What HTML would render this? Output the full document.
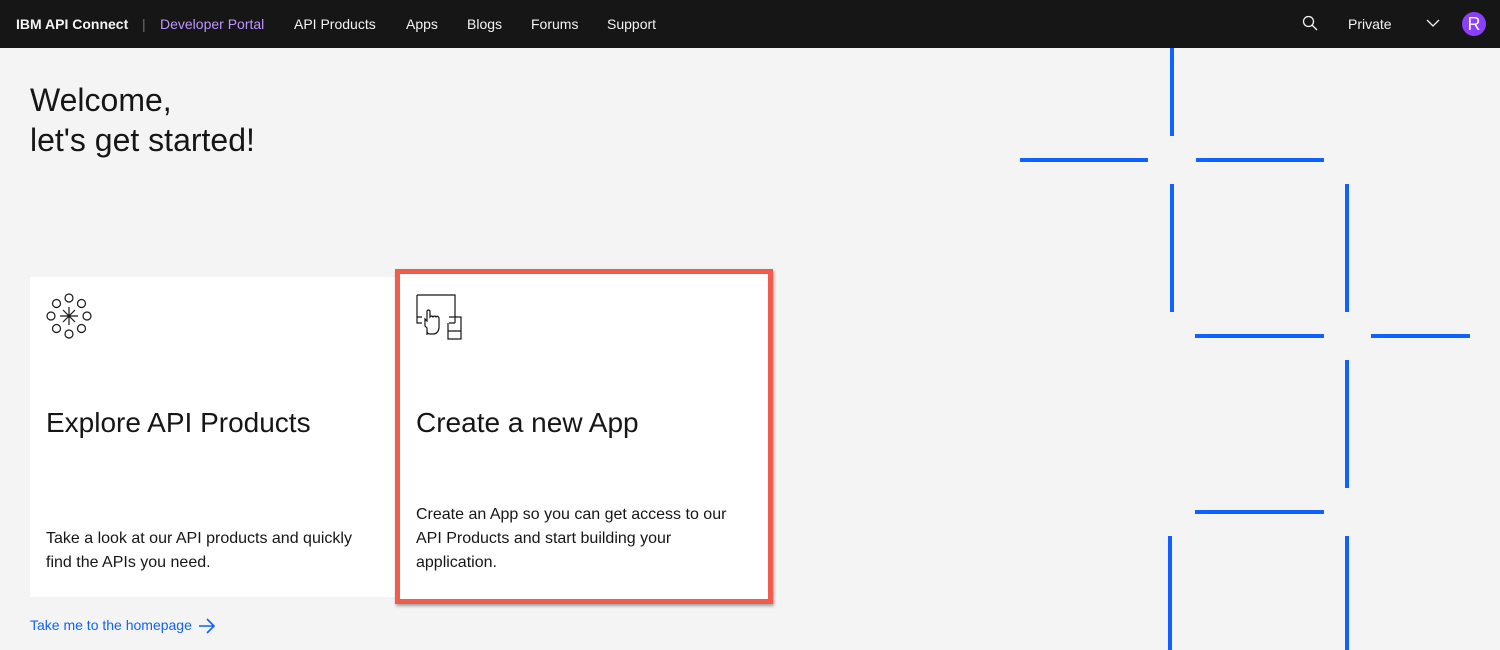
<!DOCTYPE html>
<html><head><meta charset="utf-8"><style>
*{margin:0;padding:0;box-sizing:border-box}
body{width:1500px;height:650px;overflow:hidden;background:#f4f4f4;font-family:"Liberation Sans",sans-serif;color:#161616;position:relative}
.nav{position:absolute;left:0;top:0;width:1500px;height:48px;background:#161616;color:#f4f4f4;font-size:14px}
.nav span{position:absolute;top:16px;line-height:16px}
.b{position:absolute;background:#0f62fe}
.h{height:4px;width:128px}
.v{width:4px;height:128px}
h1{position:absolute;left:30px;top:80px;font-size:32px;font-weight:400;line-height:40px;color:#161616}
.card{position:absolute;background:#fff}
.t{position:absolute;font-size:28px;line-height:32px}
.p{position:absolute;font-size:16px;line-height:24px;color:#161616}
</style></head><body>
<div class="nav">
<span style="left:16px;font-weight:bold">IBM API Connect</span>
<span style="left:142px;color:#6f6f6f">|</span>
<span style="left:160px;color:#be95ff">Developer Portal</span>
<span style="left:294px">API Products</span>
<span style="left:406px">Apps</span>
<span style="left:467px">Blogs</span>
<span style="left:531px">Forums</span>
<span style="left:607px">Support</span>
<svg style="position:absolute;left:1302px;top:15px" width="16" height="16" viewBox="0 0 16 16" fill="none" stroke="#f4f4f4" stroke-width="1.3"><circle cx="6.5" cy="6.5" r="5"/><path d="M10 10l5 5"/></svg>
<span style="left:1348px">Private</span>
<svg style="position:absolute;left:1426px;top:18px" width="14" height="10" viewBox="0 0 14 10" fill="none" stroke="#f4f4f4" stroke-width="1.3"><path d="M1 2l6 6 6-6"/></svg>
<div style="position:absolute;left:1462px;top:12px;width:24px;height:24px;border-radius:50%;background:#8a3ffc;color:#fff;font-size:18px;text-align:center;line-height:24px">R</div>
</div>
<h1>Welcome,<br>let's get started!</h1>

<div class="card" style="left:30px;top:277px;width:366px;height:320px"></div>
<svg style="position:absolute;left:45px;top:292px" width="48" height="48" viewBox="0 0 48 48" fill="none" stroke="#161616" stroke-width="1.2">
<circle cx="24" cy="6" r="4"/><circle cx="24" cy="42" r="4"/><circle cx="6" cy="24" r="4"/><circle cx="42" cy="24" r="4"/>
<circle cx="11.5" cy="11.5" r="4"/><circle cx="36.5" cy="11.5" r="4"/><circle cx="11.5" cy="36.5" r="4"/><circle cx="36.5" cy="36.5" r="4"/>
<path d="M24 15v18M15 24h18M18 18l12 12M30 18l-12 12"/></svg>
<div class="t" style="left:46px;top:407px">Explore API Products</div>
<div class="p" style="left:46px;top:527px">Take a look at our API products and quickly<br>find the APIs you need.</div>

<div style="position:absolute;left:395px;top:269px;width:378px;height:335px;border:5px solid #f25c4d;background:#fff;box-shadow:1px 2px 3px rgba(0,0,0,.35)"></div>
<svg style="position:absolute;left:414px;top:293px" width="50" height="48" viewBox="0 0 50 48" fill="none" stroke="#161616" stroke-width="1.2">
<path d="M3 2h38v28"/><path d="M3 2v28h5M35 30h6M3 24h5M35 24h12v22h-13V30M34 38h13"/>
<path d="M13 42v-7l-2-2v-7l2 2V18q1.5-2 3 0v6q1.5-2 3 0q1.5-2 3 0q1.5-2 3 1v10q-1 6-6 6h-3q-3 0-3-3z"/></svg>
<div class="t" style="left:416px;top:407px">Create a new App</div>
<div class="p" style="left:416px;top:503px">Create an App so you can get access to our<br>API Products and start building your<br>application.</div>

<div style="position:absolute;left:30px;top:616px;font-size:14px;color:#0f62fe;line-height:18px">Take me to the homepage</div>
<svg style="position:absolute;left:198px;top:618px" width="18" height="16" viewBox="0 0 18 16" fill="none" stroke="#0f62fe" stroke-width="1.6"><path d="M1 8h15M9 1l7 7-7 7"/></svg>

<div class="b v" style="left:1170px;top:48px;height:88px"></div>
<div class="b h" style="left:1020px;top:158px"></div>
<div class="b h" style="left:1196px;top:158px"></div>
<div class="b v" style="left:1170px;top:184px"></div>
<div class="b v" style="left:1345px;top:184px"></div>
<div class="b h" style="left:1195px;top:334px;width:129px"></div>
<div class="b h" style="left:1371px;top:334px;width:99px"></div>
<div class="b v" style="left:1345px;top:360px"></div>
<div class="b h" style="left:1195px;top:510px;width:129px"></div>
<div class="b v" style="left:1168px;top:536px;height:114px"></div>
<div class="b v" style="left:1345px;top:536px;height:114px"></div>
</body></html>
